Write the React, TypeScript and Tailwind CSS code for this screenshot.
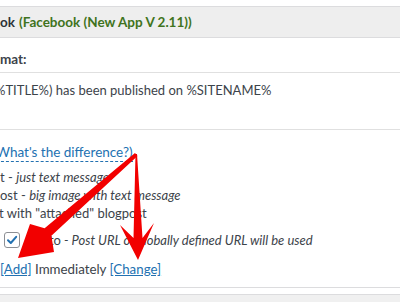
export default function App() {
  return (
    <div className="relative h-[302px] w-[400px] overflow-hidden bg-white font-['Lato',sans-serif] text-[13px] leading-[18px] text-[#3c434a]">
      {/* Section header */}
      <div className="mt-[6px] flex h-[32px] items-center whitespace-nowrap border-y border-[#dcdcde] bg-[#eeeeee] text-[13.5px] font-bold">
        <span className="text-[#2c3338]">ok</span>
        <span className="ml-[4px] text-[#3f7320]">(Facebook (New App V 2.11))</span>
      </div>

      {/* Format label */}
      <div className="flex h-[35px] items-end border-b border-[#e0e0e0] pb-[4px] text-[13.5px] font-bold">
        <span>mat:</span>
      </div>

      {/* Message template */}
      <div className="h-[57px] whitespace-nowrap border-b border-[#e0e0e0] pt-[8px]">
        <span className="-ml-[5px]">%TITLE%) has been published on %SITENAME%</span>
      </div>

      {/* Post type options */}
      <div className="whitespace-nowrap border-b border-[#dcdcde] pb-[9px] pt-[13px]">
        <a className="-ml-[4px] inline-block border-b border-dashed border-[#2271b1] text-[13.5px] leading-[17px] text-[#2271b1]">
          What's the difference?)
        </a>
        <div className="mt-[6px]">
          <div>
            t - <i>just text message</i>
          </div>
          <div>
            ost - <i>big image with text message</i>
          </div>
          <div className="-ml-[1px]">t with "attached" blogpost</div>
        </div>

        <div className="mt-[9px] flex h-[18px] items-center">
          <span className="ml-[4px] flex h-[16px] w-[16px] items-center justify-center rounded-[3px] border border-[#8c8f94] bg-white">
            <svg width="12" height="12" viewBox="0 0 12 12">
              <path d="M2 6.2 L4.8 9 L10.2 2.8" fill="none" stroke="#2271b1" strokeWidth="2" strokeLinecap="round" strokeLinejoin="round" />
            </svg>
          </span>
          <span className="ml-[13px]">
            Auto<i> - Post URL or globally defined URL will be used</i>
          </span>
        </div>

        <div className="mt-[11px] text-[13.3px]">
          <a className="text-[#2271b1] underline">[Add]</a> Immediately{" "}
          <a className="text-[#2271b1] underline">[Change]</a>
        </div>
      </div>

      {/* Next section */}
      <div className="mt-[6px] h-[20px] border-t border-[#dcdcde] bg-[#f0f0f0]" />

      {/* Annotation arrows */}
      <svg className="pointer-events-none absolute left-0 top-0" width="400" height="302" viewBox="0 0 400 302">
        <polygon
          points="135.5,154 137,154 142.5,238 154,223 138,260 120,225 133.5,238"
          fill="#f20000"
        />
        <polygon
          points="135,153 137.5,156 51.4,235.7 54,252 18,258 30,224 44.6,228.3"
          fill="#f20000"
        />
      </svg>
    </div>
  );
}
